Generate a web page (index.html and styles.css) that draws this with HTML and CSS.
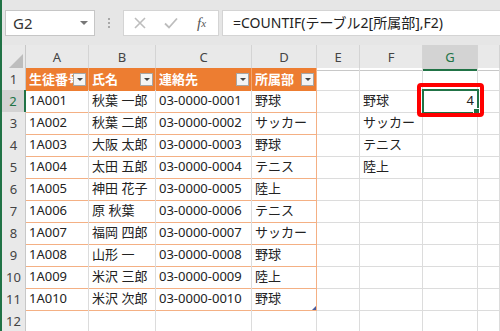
FILE: index.html
```html
<!DOCTYPE html>
<html lang="ja">
  <head>
    <meta charset="utf-8">
    <title>COUNTIF</title>
    <link rel="stylesheet" href="styles.css">
  </head>

  <body>
    <div class="app">
      <!-- formula bar -->
      <div class="bar">
        <div class="namebox"><span>G2</span><i class="caret"></i></div>
        <div class="grip"><i class="dots"></i></div>
        <div class="fxbox">
          <span class="btn">
            <svg width="12" height="12" viewBox="0 0 12 12"><path d="M1 1L11 11M11 1L1 11" stroke="#bdbdbd" stroke-width="1.6" fill="none"/></svg>
          </span>
          <span class="btn">
            <svg width="14" height="12" viewBox="0 0 14 12"><path d="M1 6.5L5 10.5L13 1.5" stroke="#bdbdbd" stroke-width="1.8" fill="none"/></svg>
          </span>
          <span class="btn fx"><i>f</i><sub>x</sub></span>
        </div>
        <div class="formula">=COUNTIF(テーブル2[所属部],F2)</div>
      </div>

      <!-- sheet -->
      <div class="sheet">
        <div class="row head">
          <div class="corner"><i></i></div>
          <div class="ch">A</div>
          <div class="ch">B</div>
          <div class="ch">C</div>
          <div class="ch">D</div>
          <div class="ch">E</div>
          <div class="ch">F</div>
          <div class="ch sel">G</div>
          <div class="ch"></div>
        </div>

        <div class="row">
          <div class="rh">1</div>
          <div class="c th"><span>生徒番号</span><i class="filter"></i></div>
          <div class="c th"><span>氏名</span><i class="filter"></i></div>
          <div class="c th"><span>連絡先</span><i class="filter"></i></div>
          <div class="c th last"><span>所属部</span><i class="filter"></i></div>
          <div class="c"></div><div class="c"></div><div class="c"></div><div class="c"></div>
        </div>

        <div class="row">
          <div class="rh sel">2</div>
          <div class="c t">1A001</div><div class="c t">秋葉 一郎</div><div class="c t">03-0000-0001</div><div class="c t last">野球</div>
          <div class="c"></div><div class="c">野球</div>
          <div class="c num active">4<i class="handle"></i><i class="mark"></i></div><div class="c"></div>
        </div>

        <div class="row">
          <div class="rh">3</div>
          <div class="c t">1A002</div><div class="c t">秋葉 二郎</div><div class="c t">03-0000-0002</div><div class="c t last">サッカー</div>
          <div class="c"></div><div class="c">サッカー</div><div class="c"></div><div class="c"></div>
        </div>

        <div class="row">
          <div class="rh">4</div>
          <div class="c t">1A003</div><div class="c t">大阪 太郎</div><div class="c t">03-0000-0003</div><div class="c t last">野球</div>
          <div class="c"></div><div class="c">テニス</div><div class="c"></div><div class="c"></div>
        </div>

        <div class="row">
          <div class="rh">5</div>
          <div class="c t">1A004</div><div class="c t">太田 五郎</div><div class="c t">03-0000-0004</div><div class="c t last">テニス</div>
          <div class="c"></div><div class="c">陸上</div><div class="c"></div><div class="c"></div>
        </div>

        <div class="row">
          <div class="rh">6</div>
          <div class="c t">1A005</div><div class="c t">神田 花子</div><div class="c t">03-0000-0005</div><div class="c t last">陸上</div>
          <div class="c"></div><div class="c"></div><div class="c"></div><div class="c"></div>
        </div>

        <div class="row">
          <div class="rh">7</div>
          <div class="c t">1A006</div><div class="c t">原 秋葉</div><div class="c t">03-0000-0006</div><div class="c t last">テニス</div>
          <div class="c"></div><div class="c"></div><div class="c"></div><div class="c"></div>
        </div>

        <div class="row">
          <div class="rh">8</div>
          <div class="c t">1A007</div><div class="c t">福岡 四郎</div><div class="c t">03-0000-0007</div><div class="c t last">サッカー</div>
          <div class="c"></div><div class="c"></div><div class="c"></div><div class="c"></div>
        </div>

        <div class="row">
          <div class="rh">9</div>
          <div class="c t">1A008</div><div class="c t">山形 一</div><div class="c t">03-0000-0008</div><div class="c t last">野球</div>
          <div class="c"></div><div class="c"></div><div class="c"></div><div class="c"></div>
        </div>

        <div class="row">
          <div class="rh">10</div>
          <div class="c t">1A009</div><div class="c t">米沢 三郎</div><div class="c t">03-0000-0009</div><div class="c t last">陸上</div>
          <div class="c"></div><div class="c"></div><div class="c"></div><div class="c"></div>
        </div>

        <div class="row">
          <div class="rh">11</div>
          <div class="c t">1A010</div><div class="c t">米沢 次郎</div><div class="c t">03-0000-0010</div><div class="c t last end">野球</div>
          <div class="c"></div><div class="c"></div><div class="c"></div><div class="c"></div>
        </div>

        <div class="row">
          <div class="rh">12</div>
          <div class="c"></div><div class="c"></div><div class="c"></div><div class="c"></div>
          <div class="c"></div><div class="c"></div><div class="c"></div><div class="c"></div>
        </div>
      </div>
    </div>
  </body>
</html>
```

FILE: styles.css
```css
body {
  margin: 0;
  background: #fff;
  font-family: "Noto Sans", "Noto Sans CJK JP", sans-serif;
}
.app {
  width: 500px;
  height: 331px;
  box-sizing: border-box;
  border-left: 2px solid #217346;
  overflow: hidden;
}

/* formula bar */
.bar {
  display: flex;
  height: 45px;
  box-sizing: border-box;
  padding: 10px 0 0 3px;
  background: #e6e6e6;
}
.namebox {
  display: flex;
  align-items: center;
  justify-content: space-between;
  width: 90px;
  height: 26px;
  box-sizing: border-box;
  padding: 0 6px 0 7px;
  border: 1px solid #c6c6c6;
  background: #fff;
  font-size: 15px;
  color: #333;
}
.caret {
  border-left: 4px solid transparent;
  border-right: 4px solid transparent;
  border-top: 4px solid #777;
}
.grip {
  display: flex;
  justify-content: center;
  align-items: center;
  width: 28px;
  height: 26px;
}
.dots {
  width: 2px;
  height: 10px;
  background: repeating-linear-gradient(#a8a8a8 0 2px, transparent 2px 4px);
}
.fxbox {
  display: flex;
  width: 96px;
  height: 26px;
  box-sizing: border-box;
  border: 1px solid #d4d4d4;
  background: #fff;
}
.btn {
  display: flex;
  align-items: center;
  justify-content: center;
  width: 31px;
}
.fx {
  font-family: "Liberation Serif", serif;
  font-size: 15px;
  color: #555;
}
.fx sub {
  font-style: italic;
  font-size: 11px;
  vertical-align: -1px;
}
.formula {
  flex: 1;
  height: 26px;
  box-sizing: border-box;
  margin-left: 3px;
  padding-left: 10px;
  border: 1px solid #d4d4d4;
  border-right: none;
  background: #fff;
  font-size: 14px;
  line-height: 23px;
  color: #222;
  white-space: nowrap;
}

/* sheet grid */
.row {
  display: grid;
  grid-template-columns: 24px 63px 67px 96px 65px 43px 63px 55px 22px;
  height: 22px;
}
.row.head {
  height: 23px;
  background: #e9e9e9;
}
.corner {
  display: flex;
  align-items: flex-end;
  justify-content: flex-end;
  padding: 0 2px 2px 0;
  border-right: 1px solid #c8c8c8;
  border-bottom: 1px solid #c8c8c8;
}
.corner i {
  width: 14px;
  height: 14px;
  background: #bdbdbd;
  clip-path: polygon(100% 0, 100% 100%, 0 100%);
}
.ch {
  border-right: 1px solid #d4d4d4;
  border-bottom: 1px solid #c8c8c8;
  text-align: center;
  font-size: 13px;
  line-height: 24px;
  color: #444;
}
.ch.sel {
  background: #d3d3d3;
  border-bottom: 2px solid #217346;
  color: #217346;
}
.rh {
  border-right: 1px solid #c8c8c8;
  border-bottom: 1px solid #d6d6d6;
  background: #e9e9e9;
  text-align: center;
  font-size: 13px;
  line-height: 22px;
  color: #444;
}
.rh.sel {
  background: #d3d3d3;
  border-right: 2px solid #217346;
  color: #217346;
}
.c {
  padding: 0 3px;
  border-right: 1px solid #dcdcdc;
  border-bottom: 1px solid #dcdcdc;
  font-size: 13px;
  line-height: 21px;
  color: #222;
  white-space: nowrap;
  overflow: hidden;
}

/* table */
.th {
  display: flex;
  align-items: center;
  padding-right: 2px;
  background: #ed7d31;
  border-right-color: #f3a672;
  border-bottom-color: #ed7d31;
  color: #fff;
  font-weight: bold;
}
.th span {
  flex: 1;
  min-width: 0;
  overflow: hidden;
}
.filter {
  display: flex;
  align-items: center;
  justify-content: center;
  flex: none;
  width: 13px;
  height: 13px;
  box-sizing: border-box;
  border: 1px solid #a6a6a6;
  background: #f4f4f4;
}
.filter::after {
  content: "";
  border-left: 3px solid transparent;
  border-right: 3px solid transparent;
  border-top: 3px solid #444;
}
.t {
  border-bottom-color: #f4b084;
}
.last {
  border-right-color: #f4b084;
}
.end {
  position: relative;
}
.end::after {
  content: "";
  position: absolute;
  right: 0;
  bottom: 0;
  width: 4px;
  height: 4px;
  background: #4a5c9c;
  clip-path: polygon(100% 0, 100% 100%, 0 100%);
}

/* active cell */
.num {
  text-align: right;
}
.active {
  position: relative;
  overflow: visible;
  outline: 2px solid #217346;
  outline-offset: -1px;
  z-index: 1;
}
.handle {
  position: absolute;
  right: -3px;
  bottom: -3px;
  width: 5px;
  height: 5px;
  border: 1px solid #fff;
  background: #217346;
}
.mark {
  position: absolute;
  left: -6px;
  top: -7px;
  width: 67px;
  height: 34px;
  box-sizing: border-box;
  border: 4px solid #ff0000;
  border-radius: 4px;
}
```
